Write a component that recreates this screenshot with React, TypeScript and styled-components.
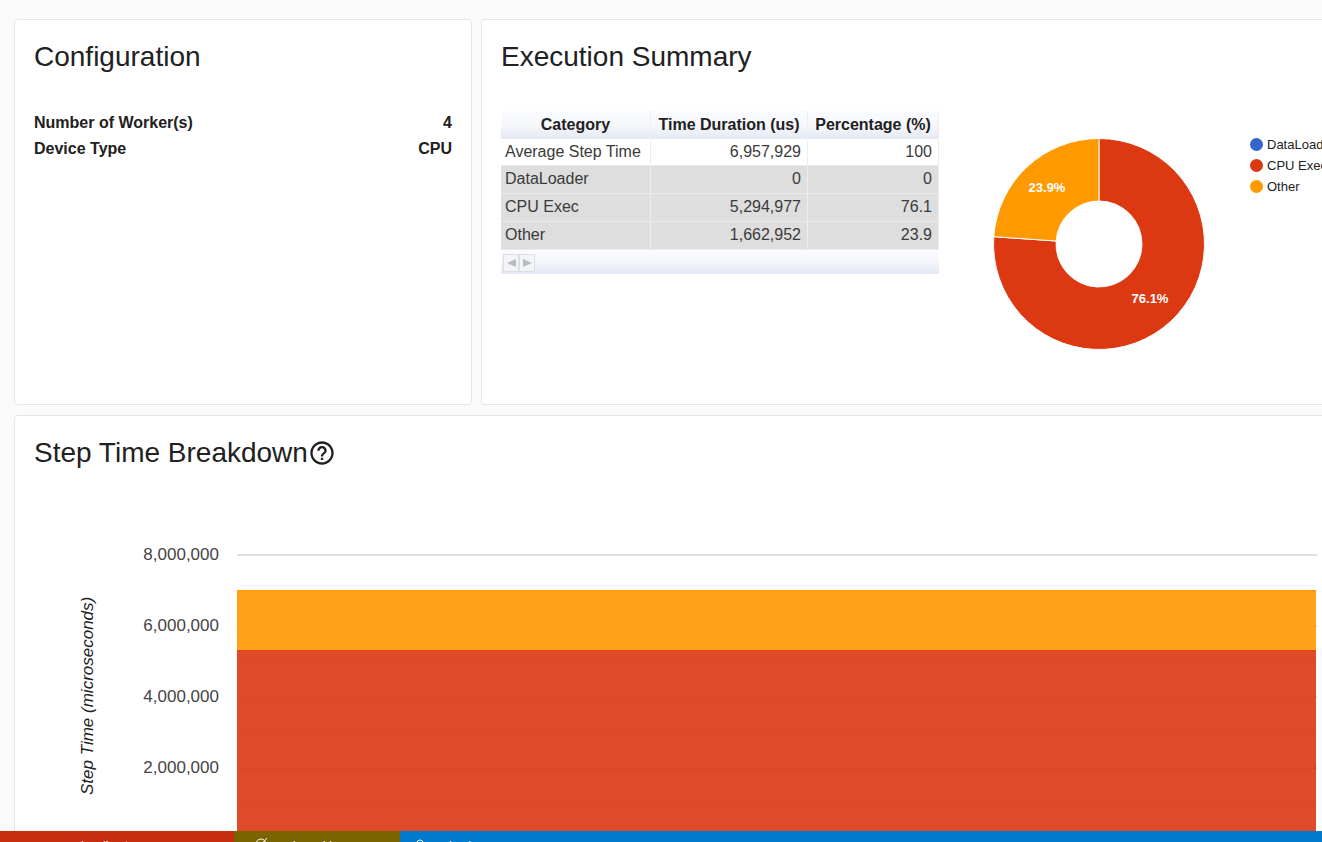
import React from "react";
import styled, { createGlobalStyle } from "styled-components";
import { MdHelpOutline } from "react-icons/md";

const GlobalStyle = createGlobalStyle`
  * { box-sizing: border-box; }
  body {
    margin: 0;
    background: #fafafa;
    color: #212121;
    font-family: "Liberation Sans", Arial, sans-serif;
  }
`;

const Shell = styled.div`
  height: 100vh;
  display: flex;
  flex-direction: column;
  overflow: hidden;
`;

const Viewport = styled.div`
  flex: 1;
  min-height: 0;
  overflow: hidden;
`;

const Page = styled.main`
  width: calc(100% + 89px);
  padding: 19px 14px;
  display: grid;
  grid-template-columns: 1fr 2fr;
  column-gap: 9px;
  row-gap: 10px;
`;

const Card = styled.section<{ $wide?: boolean }>`
  min-width: 0;
  min-height: 386px;
  padding: 20px 19px;
  background: #fff;
  border: 1px solid #e6e6e6;
  border-radius: 4px;
  grid-column: ${(p) => (p.$wide ? "1 / -1" : "auto")};
`;

const Title = styled.h2`
  margin: 0;
  display: flex;
  align-items: center;
  font-size: 28px;
  font-weight: 400;
  line-height: 34px;
`;

const HelpButton = styled.button`
  display: flex;
  padding: 0;
  border: 0;
  background: none;
  color: #212121;
`;

const ConfigList = styled.dl`
  margin: 36px 0 0;
`;

const ConfigRow = styled.div`
  display: flex;
  justify-content: space-between;
  font-size: 16px;
  font-weight: 700;
  line-height: 26px;

  dd { margin: 0; }
`;

const SummaryBody = styled.div`
  display: flex;
  align-items: flex-start;
  margin-top: 37px;
`;

const TablePanel = styled.div`
  flex: none;
  width: 438px;
`;

const Table = styled.table`
  width: 100%;
  table-layout: fixed;
  border-collapse: separate;
  border-spacing: 0;
`;

const HeadCell = styled.th<{ $width: number }>`
  width: ${(p) => p.$width}px;
  height: 28px;
  padding: 0;
  border-right: 1px solid #eeeff3;
  background: linear-gradient(#fbfcff, #f6f7fb 50%, #e4e9f5);
  font-size: 16px;
  line-height: 26px;
  text-align: center;
`;

const Row = styled.tr<{ $shaded: boolean }>`
  height: ${(p) => (p.$shaded ? 28 : 27)}px;
  background: ${(p) => (p.$shaded ? "#dedede" : "#fff")};
`;

const Cell = styled.td<{ $numeric?: boolean }>`
  padding: 0 6px 0 4px;
  border-right: 1px solid #eee;
  border-bottom: 1px solid #eaeaea;
  color: #3a3a3a;
  font-size: 16px;
  line-height: 26px;
  text-align: ${(p) => (p.$numeric ? "right" : "left")};
  vertical-align: top;
`;

const Pager = styled.div`
  display: flex;
  height: 24px;
  padding: 4px 2px 2px;
  background: linear-gradient(#fbfcff, #f3f5fa 50%, #e3e8f4);
`;

const PageButton = styled.button`
  display: flex;
  align-items: center;
  justify-content: center;
  width: 16px;
  height: 18px;
  padding: 0;
  border: 1px solid #dcdee2;
  background: #f3f4f7;
  color: #b9bbbf;
`;

const Donut = styled.svg`
  flex: none;
  width: 212px;
  height: 212px;
  margin: 27px 45px 0 54px;
  font-size: 13px;
  font-weight: 700;
`;

const Legend = styled.ul`
  margin: 23px 0 0;
  padding: 0;
  list-style: none;
  white-space: nowrap;
`;

const LegendItem = styled.li<{ $color: string }>`
  display: flex;
  align-items: center;
  gap: 4px;
  color: #222;
  font-size: 13px;
  line-height: 21px;

  &::before {
    content: "";
    width: 13px;
    height: 13px;
    border-radius: 50%;
    background: ${(p) => p.$color};
  }
`;

const Chart = styled.div`
  display: flex;
  height: 356px;
  margin: 49px 60px 0 42px;
`;

const AxisTitle = styled.div`
  width: 24px;
  height: 354px;
  writing-mode: vertical-rl;
  transform: rotate(180deg);
  text-align: center;
  color: #222;
  font-size: 17px;
  font-style: italic;
  line-height: 24px;
`;

const Ticks = styled.div`
  width: 119px;
  color: #444;
  font-size: 17px;
  line-height: 71px;
  text-align: right;
`;

const Plot = styled.svg`
  flex: 1;
  min-width: 0;
  height: 320px;
  margin: 35px 0 0 18px;
`;

const StatusBar = styled.footer`
  flex: none;
  display: flex;
  height: 11px;
  overflow: hidden;
  color: #fff;
  background: #007acc;
  font-size: 12px;
  line-height: 30px;
`;

const StatusItem = styled.div<{ $width?: number; $inset: number; $gap?: number; $color: string }>`
  flex: none;
  display: flex;
  gap: ${(p) => p.$gap ?? 0}px;
  width: ${(p) => (p.$width ? `${p.$width}px` : "auto")};
  height: 30px;
  padding-left: ${(p) => p.$inset}px;
  background: ${(p) => p.$color};
`;

const StatusIcon = styled.svg`
  width: 14px;
  height: 14px;
  margin-top: 6px;
`;

const rows = [
  ["Average Step Time", "6,957,929", "100"],
  ["DataLoader", "0", "0"],
  ["CPU Exec", "5,294,977", "76.1"],
  ["Other", "1,662,952", "23.9"],
];

const legend = [
  ["DataLoader", "#3366cc"],
  ["CPU Exec", "#dc3912"],
  ["Other", "#ff9900"],
];

const ticks = ["8,000,000", "6,000,000", "4,000,000", "2,000,000"];

const point = (radius: number, share: number) => {
  const angle = share * 2 * Math.PI;
  return `${106 + radius * Math.sin(angle)} ${106 - radius * Math.cos(angle)}`;
};

const slice = (from: number, to: number) => {
  const large = to - from > 0.5 ? 1 : 0;
  return `M${point(105.5, from)} A105.5 105.5 0 ${large} 1 ${point(105.5, to)} L${point(43, to)} A43 43 0 ${large} 0 ${point(43, from)} Z`;
};

export default function App() {
  return (
    <Shell>
      <GlobalStyle />
      <Viewport>
        <Page>
          <Card>
            <Title>Configuration</Title>
            <ConfigList>
              <ConfigRow><dt>Number of Worker(s)</dt><dd>4</dd></ConfigRow>
              <ConfigRow><dt>Device Type</dt><dd>CPU</dd></ConfigRow>
            </ConfigList>
          </Card>

          <Card>
            <Title>Execution Summary</Title>
            <SummaryBody>
              <TablePanel>
                <Table>
                  <thead>
                    <tr>
                      <HeadCell $width={150}>Category</HeadCell>
                      <HeadCell $width={157}>Time Duration (us)</HeadCell>
                      <HeadCell $width={131}>Percentage (%)</HeadCell>
                    </tr>
                  </thead>
                  <tbody>
                    {rows.map(([name, time, share], i) => (
                      <Row key={name} $shaded={i > 0}>
                        <Cell>{name}</Cell>
                        <Cell $numeric>{time}</Cell>
                        <Cell $numeric>{share}</Cell>
                      </Row>
                    ))}
                  </tbody>
                </Table>
                <Pager>
                  <PageButton disabled aria-label="Previous page">
                    <svg width="9" height="8"><path d="M9 0V8L0 4Z" fill="currentColor" /></svg>
                  </PageButton>
                  <PageButton disabled aria-label="Next page">
                    <svg width="9" height="8"><path d="M0 0V8L9 4Z" fill="currentColor" /></svg>
                  </PageButton>
                </Pager>
              </TablePanel>
              <Donut viewBox="0 0 212 212">
                <path d={slice(0, 0.761)} fill="#dc3912" stroke="#fff" />
                <path d={slice(0.761, 1)} fill="#ff9900" stroke="#fff" />
                <text x="54" y="54" fill="#fff" textAnchor="middle">23.9%</text>
                <text x="157" y="165" fill="#fff" textAnchor="middle">76.1%</text>
              </Donut>
              <Legend>
                {legend.map(([name, color]) => (
                  <LegendItem key={name} $color={color}>{name}</LegendItem>
                ))}
              </Legend>
            </SummaryBody>
          </Card>

          <Card $wide>
            <Title>
              Step Time Breakdown
              <HelpButton aria-label="Help"><MdHelpOutline size={28} /></HelpButton>
            </Title>
            <Chart>
              <AxisTitle>Step Time (microseconds)</AxisTitle>
              <Ticks>
                {ticks.map((tick) => <div key={tick}>{tick}</div>)}
              </Ticks>
              <Plot>
                {[36, 107, 178, 249].map((y) => (
                  <rect key={y} y={y} width="100%" height="1" fill="#f3f3f3" />
                ))}
                {[0, 71, 142, 213, 284].map((y) => (
                  <rect key={y} y={y} width="100%" height="2" fill="#e0e0e0" />
                ))}
                <svg x="-1" width="100%" height="284">
                  <rect x="1" y="36" width="100%" height="60" fill="#ffa218" />
                  <rect x="1" y="36" width="100%" height="2" fill="#ff9c08" />
                  <rect x="1" y="96" width="100%" height="188" fill="#df4a28" />
                  <rect x="1" y="96" width="100%" height="1" fill="#e04410" />
                  <rect x="1" y="72" width="100%" height="1" fill="#fc9f18" />
                  {[107, 143, 178, 214, 249].map((y) => (
                    <rect key={y} x="1" y={y} width="100%" height="1" fill="#da4726" />
                  ))}
                </svg>
              </Plot>
            </Chart>
          </Card>
        </Page>
      </Viewport>

      <StatusBar>
        <StatusItem $width={234} $inset={81} $color="#c72e0f">localhost</StatusItem>
        <StatusItem $width={166} $inset={21} $gap={7} $color="#7a6400">
          <StatusIcon viewBox="0 0 14 14" fill="none" stroke="currentColor" strokeWidth="1">
            <circle cx="6" cy="7" r="5" />
            <path d="M2 12L12 1" />
          </StatusIcon>
          main problems
        </StatusItem>
        <StatusItem $inset={13} $gap={22} $color="#007acc">
          <StatusIcon viewBox="0 0 14 14" fill="none" stroke="currentColor" strokeWidth="1">
            <circle cx="7" cy="6" r="3" />
            <path d="M2 14C2 8 12 8 12 14" />
          </StatusIcon>
          bash
        </StatusItem>
      </StatusBar>
    </Shell>
  );
}
